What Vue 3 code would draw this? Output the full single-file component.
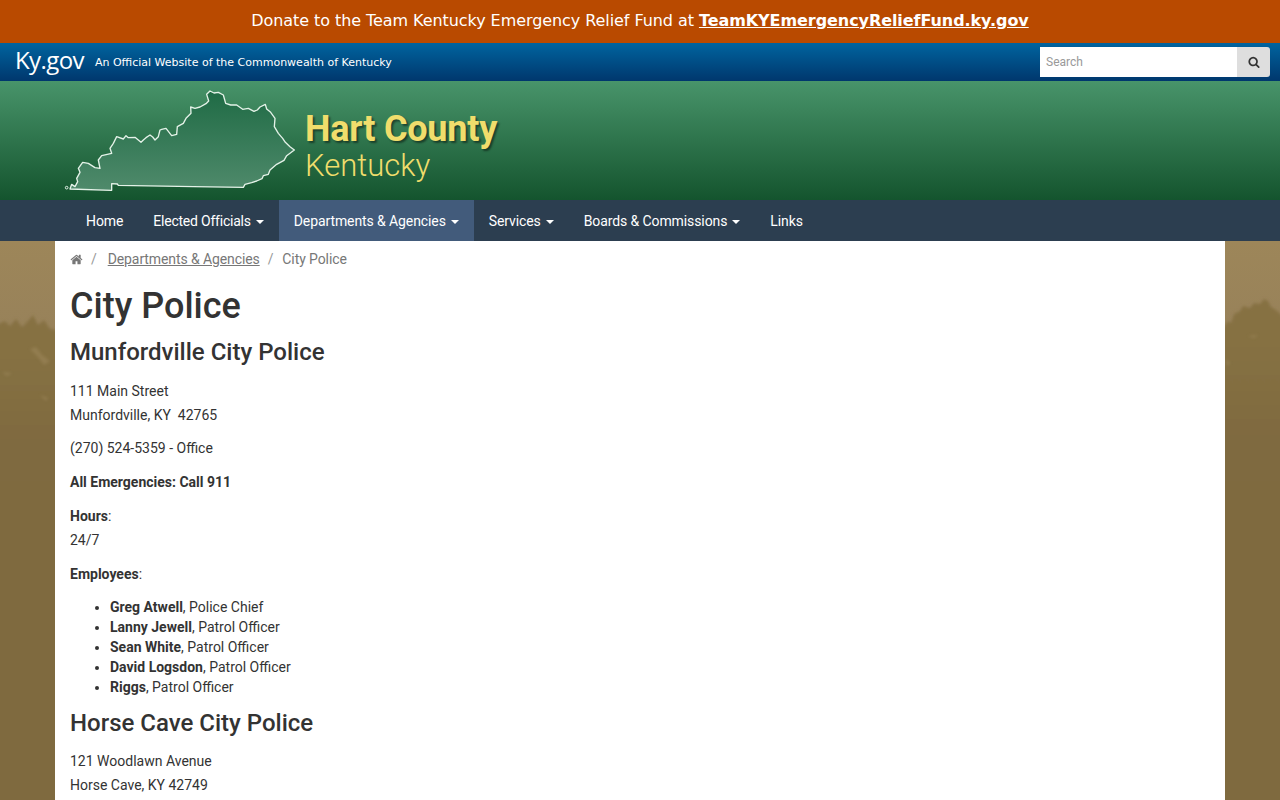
<script setup>
const navItems = [
  { label: 'Home' },
  { label: 'Elected Officials', caret: true, snug: true },
  { label: 'Departments & Agencies', caret: true, active: true },
  { label: 'Services', caret: true },
  { label: 'Boards & Commissions', caret: true },
  { label: 'Links' }
]

const employees = [
  { name: 'Greg Atwell', title: 'Police Chief' },
  { name: 'Lanny Jewell', title: 'Patrol Officer' },
  { name: 'Sean White', title: 'Patrol Officer' },
  { name: 'David Logsdon', title: 'Patrol Officer' },
  { name: 'Riggs', title: 'Patrol Officer' }
]

const kyOutline = 'M30 312 L155 316 L155 296 L172 297 L175 301 L400 305 L550 307 L555 298 L575 293 L590 288 L606 281 L610 272 L625 268 L630 255 L650 238 L672 226 L680 212 L703 195 L690 185 L676 172 L668 160 L655 145 L643 125 L645 100 L632 82 L620 72 L616 58 L600 66 L592 75 L582 79 L565 70 L548 73 L530 60 L512 60 L497 55 L490 30 L475 22 L462 24 L450 18 L440 28 L446 48 L438 56 L420 66 L405 70 L392 66 L393 85 L378 100 L370 115 L352 125 L350 148 L335 152 L318 130 L305 133 L300 135 L295 155 L285 165 L278 156 L270 150 L258 158 L250 165 L243 172 L225 157 L205 158 L198 152 L190 162 L170 155 L160 175 L150 190 L155 205 L125 212 L115 225 L120 250 L105 248 L85 235 L68 232 L55 250 L60 262 L50 280 L53 290 L45 305 L35 298 Z'
</script>

<template>
  <div class="banner">
    Donate to the Team Kentucky Emergency Relief Fund at
    <a href="#" class="banner-link">TeamKYEmergencyReliefFund.ky.gov</a>
  </div>

  <div class="kybar">
    <div class="kybar-left">
      <span class="kylogo">Ky.gov</span>
      <span class="tagline">An Official Website of the Commonwealth of Kentucky</span>
    </div>
    <form class="search" @submit.prevent>
      <input type="text" placeholder="Search" />
      <button type="submit" aria-label="Search">
        <svg width="12" height="12" viewBox="0 0 1792 1792"><path fill="#333" d="M1216 832q0-185-131.500-316.500t-316.500-131.500-316.500 131.500-131.500 316.500 131.500 316.500 316.500 131.500 316.500-131.500 131.500-316.500zm512 832q0 52-38 90t-90 38q-54 0-90-38l-343-342q-179 124-399 124-143 0-273.500-55.500t-225-150-150-225-55.500-273.500 55.500-273.500 150-225 225-150 273.500-55.500 273.500 55.500 225 150 150 225 55.500 273.500q0 220-124 399l343 343q37 37 37 90z"/></svg>
      </button>
    </form>
  </div>

  <header class="masthead">
    <svg class="ky-map" width="240" height="110" viewBox="0 0 720 330">
      <defs>
        <linearGradient id="kyfill" x1="0" y1="0" x2="0" y2="1">
          <stop offset="0" stop-color="#1f6b45" />
          <stop offset="1" stop-color="#4f8a6b" />
        </linearGradient>
      </defs>
      <path :d="kyOutline" fill="url(#kyfill)" stroke="#e4f2e8" stroke-width="4" stroke-linejoin="round" />
      <circle cx="20" cy="308" r="4" fill="none" stroke="#e4f2e8" stroke-width="3" />
    </svg>
    <div class="county">
      <div class="county-name">Hart County</div>
      <div class="county-state">Kentucky</div>
    </div>
  </header>

  <nav class="mainnav">
    <a v-for="item in navItems" :key="item.label" href="#" class="navlink" :class="{ active: item.active, snug: item.snug }">
      {{ item.label }}<span v-if="item.caret" class="caret"></span>
    </a>
  </nav>

  <div class="backdrop">
    <svg class="trees" width="1280" height="240" viewBox="0 0 1280 240" aria-hidden="true">
      <defs>
        <filter id="soft"><feGaussianBlur stdDeviation="1.6" /></filter>
        <linearGradient id="treefill" x1="0" y1="0" x2="0" y2="1">
          <stop offset="0.2" stop-color="#867143" />
          <stop offset="0.75" stop-color="#7f6a3f" />
        </linearGradient>
      </defs>
      <g filter="url(#soft)" fill="url(#treefill)">
        <path d="M-4 84 L5 80 L10 85 L16 78 L22 86 L28 80 L33 74 L38 84 L44 79 L50 88 L58 90 L58 244 L-4 244 Z" />
        <path d="M1223 87 L1228 80 L1231 82 L1234 73 L1240 70 L1243 65 L1250 67 L1254 62 L1260 63 L1264 58 L1268 60 L1271 66 L1276 69 L1284 76 L1284 244 L1223 244 Z" />
      </g>
      <g filter="url(#soft)" fill="#a08a5e" opacity="0.5">
        <path d="M30 108 L36 106 L42 114 L50 120 L44 124 L38 116 Z" />
        <path d="M40 154 L48 157 L46 160 Z" />
        <path d="M2 131 L12 132 L7 135 Z" />
        <path d="M1248 95 L1258 94 L1254 97 Z" />
        <path d="M1226 118 L1230 122 L1227 125 Z" />
      </g>
    </svg>
    <main class="content">
      <ol class="crumbs">
        <li>
          <a href="#" class="home" aria-label="Home">
            <svg width="13" height="13" viewBox="0 0 1792 1792"><path fill="#777" d="M1472 992v480q0 26-19 45t-45 19h-384v-384h-256v384h-384q-26 0-45-19t-19-45v-480q0-1 .5-3t.5-3l575-474 575 474q1 2 1 6zm223-69l-62 74q-8 9-21 11h-3q-13 0-21-7l-692-577-692 577q-12 8-24 7-13-2-21-11l-62-74q-8-10-7-23.500t11-21.500l719-599q32-26 76-26t76 26l244 204v-195q0-14 9-23t23-9h192q14 0 23 9t9 23v408l219 182q10 8 11 21.500t-7 23.500z"/></svg>
          </a>
        </li>
        <li class="sep">/</li>
        <li><a href="#" class="crumb-link">Departments &amp; Agencies</a></li>
        <li class="sep">/</li>
        <li class="current">City Police</li>
      </ol>

      <h1>City Police</h1>

      <h2>Munfordville City Police</h2>
      <p>111 Main Street<br />Munfordville, KY&nbsp; 42765</p>
      <p>(270) 524-5359 - Office</p>
      <p><strong>All Emergencies: Call 911</strong></p>
      <p><strong>Hours</strong>:<br />24/7</p>
      <p><strong>Employees</strong>:</p>
      <ul>
        <li v-for="person in employees" :key="person.name">
          <strong>{{ person.name }}</strong>, {{ person.title }}
        </li>
      </ul>

      <h2 class="tight">Horse Cave City Police</h2>
      <p>121 Woodlawn Avenue<br />Horse Cave, KY 42749</p>
    </main>
  </div>
</template>

<style>
html, body {
  margin: 0;
  background: #7f6a3f;
}
</style>

<style scoped>
.banner {
  height: 43px;
  line-height: 41px;
  background: #b94a00;
  color: #fff;
  text-align: center;
  font-family: "DejaVu Sans", sans-serif;
  font-size: 16px;
  letter-spacing: -0.07px;
}
.banner-link {
  color: #fff;
  font-weight: 700;
  text-decoration: underline;
}

.kybar {
  height: 38px;
  background: linear-gradient(#00649f, #00376d);
  display: flex;
  align-items: center;
  justify-content: space-between;
  padding: 0 10px 0 15px;
}
.kybar-left {
  display: flex;
  align-items: center;
  gap: 11px;
}
.kylogo {
  color: #fff;
  font-family: "Open Sans", sans-serif;
  font-size: 24px;
  line-height: 28px;
  letter-spacing: -0.6px;
  margin-bottom: 4px;
}
.tagline {
  color: #fff;
  font-family: "DejaVu Sans", sans-serif;
  font-size: 11px;
}
.search {
  display: flex;
  width: 230px;
  height: 30px;
}
.search input {
  flex: 1;
  min-width: 0;
  box-sizing: border-box;
  height: 30px;
  padding: 0 6px;
  border: 0;
  background: #fff;
  font-family: Roboto, sans-serif;
  font-size: 12px;
}
.search input::placeholder {
  color: #999;
}
.search button {
  width: 33px;
  height: 30px;
  padding: 0;
  border: 0;
  border-radius: 0 3px 3px 0;
  background: #dedede;
  display: flex;
  align-items: center;
  justify-content: center;
}

.masthead {
  height: 119px;
  box-sizing: border-box;
  background: linear-gradient(#48946a, #14542e);
  display: flex;
  align-items: flex-start;
  padding: 4px 0 0 60px;
}
.ky-map {
  flex: none;
}
.county {
  margin: 23px 0 0 5px;
  color: #f0dd6c;
  font-family: Roboto, sans-serif;
}
.county-name {
  font-size: 36px;
  line-height: 42px;
  font-weight: 700;
  letter-spacing: -0.2px;
  text-shadow: 2px 2px 2px rgba(0, 0, 0, 0.45);
}
.county-state {
  font-size: 31px;
  line-height: 31px;
  font-weight: 300;
}

.mainnav {
  height: 41px;
  background: #2c3e50;
  display: flex;
  padding-left: 71px;
  font-family: Roboto, sans-serif;
  font-size: 14px;
  letter-spacing: -0.1px;
}
.navlink {
  padding: 0 15px;
  line-height: 43px;
  color: #fff;
  text-decoration: none;
}
.navlink.snug {
  letter-spacing: -0.22px;
}
.navlink.active {
  background: #425b7b;
}
.caret {
  display: inline-block;
  margin-left: 5px;
  vertical-align: middle;
  border-top: 4px solid #fff;
  border-left: 4px solid transparent;
  border-right: 4px solid transparent;
}

.backdrop {
  position: relative;
  min-height: 559px;
  background: linear-gradient(#9d8659 0, #98825a 86px, #857046 100px, #7f6a3f 240px);
}
.trees {
  position: absolute;
  top: 0;
  left: 0;
}
.content {
  position: relative;
  width: 1170px;
  min-height: 559px;
  box-sizing: border-box;
  margin: 0 auto;
  padding: 0 15px 20px;
  background: #fff;
  color: #333;
  font-family: Roboto, sans-serif;
  font-size: 14px;
  line-height: 23.8px;
}
.crumbs {
  display: flex;
  align-items: center;
  gap: 8px;
  margin: 0;
  padding: 7px 0 5px;
  list-style: none;
  color: #777;
  letter-spacing: -0.1px;
}
.crumbs li {
  display: flex;
  align-items: center;
}
.crumbs .home {
  display: flex;
}
.crumbs .sep {
  color: #999;
}
.crumbs .current {
  margin-left: 1px;
}
.crumb-link {
  margin-left: 3px;
  color: #777;
  text-decoration: underline;
}
h1 {
  margin: 9px 0 0;
  font-size: 36px;
  line-height: 40px;
  font-weight: 500;
}
h2 {
  margin: 13px 0 15px;
  font-size: 24px;
  line-height: 26px;
  font-weight: 500;
}
h2.tight {
  margin-bottom: 14px;
}
p {
  margin: 0 0 10px;
}
strong {
  font-weight: 700;
}
ul {
  margin: 11px 0 10px;
  padding-left: 40px;
  line-height: 20px;
}
</style>
